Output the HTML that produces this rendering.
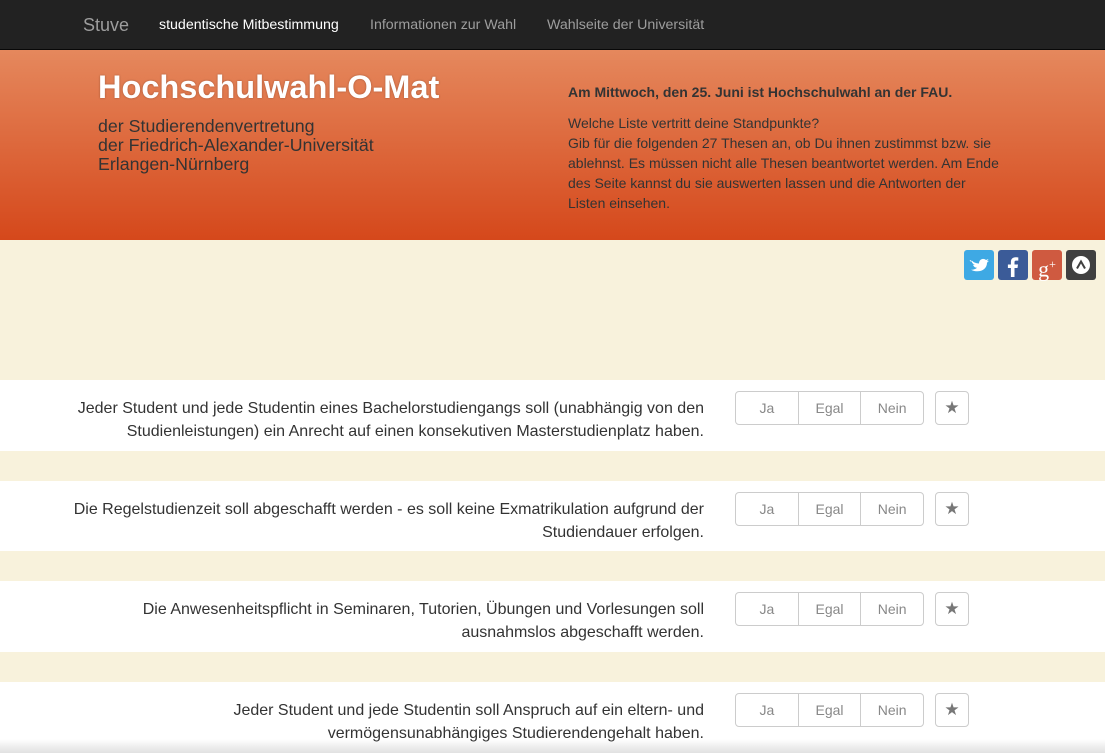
<!DOCTYPE html>
<html><head><meta charset="utf-8"><style>
*{margin:0;padding:0;box-sizing:border-box}
body{width:1105px;height:753px;overflow:hidden;background:#f8f2dc;font-family:"Liberation Sans",sans-serif;color:#333;position:relative}
.nav{height:50px;background:#222;border-bottom:1px solid #080808;position:relative}
.nav span{position:absolute;top:17px;font-size:14.2px;color:#9d9d9d}
.hdr{height:190px;background:linear-gradient(#e5885d,#d5481b);position:relative}
.title{position:absolute;left:98px;top:19px;font-size:32.5px;font-weight:bold;color:#fff;text-shadow:0 0 2px rgba(0,0,0,.3)}
.sub{position:absolute;left:98px;top:67px;font-size:17.8px;line-height:19px;color:#333}
.info{position:absolute;left:568px;top:32px;width:436px;font-size:14px;line-height:20px;color:#333}
.soc{position:absolute;top:250px;width:30px;height:30px;border-radius:3px}
.row{position:absolute;left:0;width:1105px;height:71px;background:#fff}
.q{position:absolute;right:401px;top:17px;text-align:right;font-size:16px;line-height:23px;color:#333;white-space:nowrap}
.bg{position:absolute;left:735px;top:11px;width:189px;height:34px;border:1px solid #ccc;border-radius:4px;display:flex}
.bg div{flex:1;text-align:center;line-height:33px;font-size:14px;color:#888;border-left:1px solid #ccc}
.bg div:first-child{border-left:0}
.star{position:absolute;left:935px;top:11px;width:34px;height:34px;border:1px solid #ccc;border-radius:4px;text-align:center;line-height:32px;font-size:17px;color:#777}
.shadow{position:absolute;left:0;bottom:0;width:1105px;height:14px;background:linear-gradient(rgba(0,0,0,0),rgba(0,0,0,.12))}
</style></head><body>
<div class="nav">
<span style="left:83px;top:15px;font-size:18px;color:#9d9d9d">Stuve</span>
<span style="left:159px;color:#fff">studentische Mitbestimmung</span>
<span style="left:370px">Informationen zur Wahl</span>
<span style="left:547px">Wahlseite der Universität</span>
</div>
<div class="hdr">
<div class="title">Hochschulwahl-O-Mat</div>
<div class="sub">der Studierendenvertretung<br>der Friedrich-Alexander-Universität<br>Erlangen-Nürnberg</div>
<div class="info"><b>Am Mittwoch, den 25. Juni ist Hochschulwahl an der FAU.</b><br><div style="height:11px"></div>Welche Liste vertritt deine Standpunkte?<br>Gib für die folgenden 27 Thesen an, ob Du ihnen zustimmst bzw. sie ablehnst. Es müssen nicht alle Thesen beantwortet werden. Am Ende des Seite kannst du sie auswerten lassen und die Antworten der Listen einsehen.</div>
</div>
<div class="soc" style="left:964px;background:#3ea9e4"><svg width="30" height="30" viewBox="0 0 30 30"><path d="M6 10c3 2 6 3.5 9 3.5 0-4 4-6 7-3.5l2.5-1-1.5 2.2 2-.5-2 2c0 7-8 11-16 7 3 0 5-1 6-2-2 0-3.5-1.5-4-3h2c-2-.7-3.3-2-3.3-4l2 .6C6 12 5.5 11 6 10z" fill="#fff"/></svg></div>
<div class="soc" style="left:998px;background:#3b5b98"><svg width="30" height="30" viewBox="0 0 30 30"><path d="M16.5 27v-9h3l.5-3.5h-3.5v-2.2c0-1 .3-1.7 1.8-1.7h2v-3.2c-.4 0-1.5-.2-2.8-.2-2.8 0-4.6 1.7-4.6 4.8v2.5h-3V18h3v9z" fill="#fff"/></svg></div>
<div class="soc" style="left:1032px;background:#cf5a40;color:#fff;font-family:'Liberation Serif',serif;font-size:22px;line-height:28px;text-align:center">g<sup style="font-size:12px">+</sup></div>
<div class="soc" style="left:1066px;background:#404040"><svg width="30" height="30" viewBox="0 0 30 30"><circle cx="15" cy="15" r="9" fill="#fff"/><path d="M11 18.5l4-7 4 7" stroke="#404040" stroke-width="2" fill="none"/></svg></div>

<div class="row" style="top:380px"><div class="q">Jeder Student und jede Studentin eines Bachelorstudiengangs soll (unabhängig von den<br>Studienleistungen) ein Anrecht auf einen konsekutiven Masterstudienplatz haben.</div><div class="bg"><div>Ja</div><div>Egal</div><div>Nein</div></div><div class="star">★</div></div>
<div class="row" style="top:481px;height:70px"><div class="q">Die Regelstudienzeit soll abgeschafft werden - es soll keine Exmatrikulation aufgrund der<br>Studiendauer erfolgen.</div><div class="bg"><div>Ja</div><div>Egal</div><div>Nein</div></div><div class="star">★</div></div>
<div class="row" style="top:581px"><div class="q">Die Anwesenheitspflicht in Seminaren, Tutorien, Übungen und Vorlesungen soll<br>ausnahmslos abgeschafft werden.</div><div class="bg"><div>Ja</div><div>Egal</div><div>Nein</div></div><div class="star">★</div></div>
<div class="row" style="top:682px"><div class="q">Jeder Student und jede Studentin soll Anspruch auf ein eltern- und<br>vermögensunabhängiges Studierendengehalt haben.</div><div class="bg"><div>Ja</div><div>Egal</div><div>Nein</div></div><div class="star">★</div></div>
<div class="shadow"></div>
</body></html>
